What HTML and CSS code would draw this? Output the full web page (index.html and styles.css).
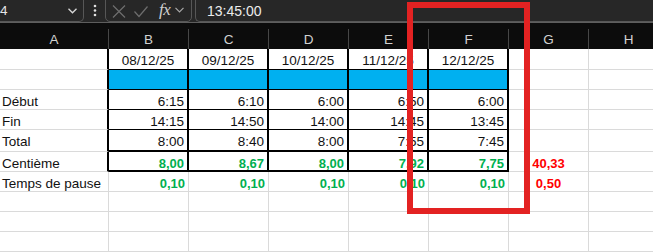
FILE: index.html
```html
<!DOCTYPE html>
<html lang="fr">
<head>
<meta charset="utf-8">
<title>Feuille</title>
<link rel="stylesheet" href="styles.css">
</head>
<body>
<div class="app">
  <div class="topbar">
    <div class="namebox">
      <span class="nb-text">4</span>
      <svg class="chev" width="9" height="6" viewBox="0 0 9 6"><polyline points="0.5,0.8 4.5,4.8 8.5,0.8" fill="none" stroke="#d8d8d8" stroke-width="1.3"/></svg>
    </div>
    <svg class="dots" width="21" height="22" viewBox="0 0 21 22"><circle cx="11" cy="6" r="1.3" fill="#e0e0e0"/><circle cx="11" cy="10.5" r="1.3" fill="#e0e0e0"/><circle cx="11" cy="15" r="1.3" fill="#e0e0e0"/></svg>
    <div class="fxbox">
      <svg class="ico-x" width="14" height="13" viewBox="0 0 14 13"><path d="M1 0.5 L13 12.5 M13 0.5 L1 12.5" stroke="#6e6e6e" stroke-width="1.2" fill="none"/></svg>
      <svg class="ico-ok" width="14" height="13" viewBox="0 0 14 13"><polyline points="0.5,6.5 5,11.5 13.5,1.5" stroke="#6e6e6e" stroke-width="1.2" fill="none"/></svg>
      <span class="fx">fx</span>
      <svg class="chev2" width="9" height="6" viewBox="0 0 9 6"><polyline points="0.5,0.8 4.5,4.8 8.5,0.8" fill="none" stroke="#a8a8a8" stroke-width="1.2"/></svg>
    </div>
    <div class="formula">13:45:00</div>
  </div>

  <div class="colheads">
    <div class="hc"><div class="hi">A</div></div>
    <div class="hc"><div class="hi">B</div></div>
    <div class="hc"><div class="hi">C</div></div>
    <div class="hc"><div class="hi">D</div></div>
    <div class="hc"><div class="hi">E</div></div>
    <div class="hc"><div class="hi">F</div></div>
    <div class="hc"><div class="hi">G</div></div>
    <div class="hc"><div class="hi">H</div></div>
  </div>

  <div class="sheet">
    <!-- row 1 -->
    <div class="c lab ka"></div>
    <div class="c ctr kb">08/12/25</div>
    <div class="c ctr kb">09/12/25</div>
    <div class="c ctr kb">10/12/25</div>
    <div class="c ctr kb">11/12/25</div>
    <div class="c ctr kb">12/12/25</div>
    <div class="c"></div>
    <div class="c"></div>
    <!-- row 2 -->
    <div class="c lab ka"></div>
    <div class="c kb blue"></div>
    <div class="c kb blue"></div>
    <div class="c kb blue"></div>
    <div class="c kb blue"></div>
    <div class="c kb blue"></div>
    <div class="c"></div>
    <div class="c"></div>
    <!-- row 3 -->
    <div class="c lab ka">Début</div>
    <div class="c r kb">6:15</div>
    <div class="c r kb">6:10</div>
    <div class="c r kb">6:00</div>
    <div class="c r kb">6:50</div>
    <div class="c r kb">6:00</div>
    <div class="c"></div>
    <div class="c"></div>
    <!-- row 4 -->
    <div class="c lab ka">Fin</div>
    <div class="c r kb">14:15</div>
    <div class="c r kb">14:50</div>
    <div class="c r kb">14:00</div>
    <div class="c r kb">14:45</div>
    <div class="c r kb">13:45</div>
    <div class="c"></div>
    <div class="c"></div>
    <!-- row 5 -->
    <div class="c lab ka">Total</div>
    <div class="c r kb kt">8:00</div>
    <div class="c r kb kt">8:40</div>
    <div class="c r kb kt">8:00</div>
    <div class="c r kb kt">7:55</div>
    <div class="c r kb kt">7:45</div>
    <div class="c"></div>
    <div class="c"></div>
    <!-- row 6 -->
    <div class="c lab ka">Centième</div>
    <div class="c r kb kt green">8,00</div>
    <div class="c r kb kt green">8,67</div>
    <div class="c r kb kt green">8,00</div>
    <div class="c r kb kt green">7,92</div>
    <div class="c r kb kt green">7,75</div>
    <div class="c ctr red">40,33</div>
    <div class="c"></div>
    <!-- row 7 -->
    <div class="c lab">Temps de pause</div>
    <div class="c r green">0,10</div>
    <div class="c r green">0,10</div>
    <div class="c r green">0,10</div>
    <div class="c r green">0,10</div>
    <div class="c r green">0,10</div>
    <div class="c ctr red">0,50</div>
    <div class="c"></div>
    <!-- row 8 -->
    <div class="c"></div><div class="c"></div><div class="c"></div><div class="c"></div><div class="c"></div><div class="c"></div><div class="c"></div><div class="c"></div>
    <!-- row 9 -->
    <div class="c"></div><div class="c"></div><div class="c"></div><div class="c"></div><div class="c"></div><div class="c"></div><div class="c"></div><div class="c"></div>
    <!-- row 10 -->
    <div class="c"></div><div class="c"></div><div class="c"></div><div class="c"></div><div class="c"></div><div class="c"></div><div class="c"></div><div class="c"></div>
  </div>

  <div class="annot"></div>
</div>
</body>
</html>
```

FILE: styles.css
```css
html, body {
  margin: 0;
  padding: 0;
  background: #ffffff;
}

.app {
  position: relative;
  width: 653px;
  height: 252px;
  overflow: hidden;
  font-family: "Liberation Sans", Arial, sans-serif;
}

/* ---------- formula bar ---------- */
.topbar {
  height: 22px;
  background: #272727;
  border-bottom: 1px solid #5e5e5e;
  display: flex;
  align-items: flex-end;
  overflow: hidden;
}

.namebox {
  flex: 0 0 auto;
  width: 84px;
  height: 28px;
  box-sizing: border-box;
  border: 1px solid #575757;
  border-left: none;
  border-radius: 0 5px 5px 0;
  display: flex;
  align-items: flex-end;
  padding: 0 0 2px 0;
  color: #e6e6e6;
  font-size: 13.5px;
  line-height: 16px;
}

.nb-text {
  flex: 1;
}

.chev {
  margin: 0 6px 5px 0;
}

.dots {
  flex: 0 0 auto;
  align-self: flex-start;
}

.fxbox {
  flex: 0 0 auto;
  width: 87px;
  height: 28px;
  box-sizing: border-box;
  border: 1px solid #575757;
  border-radius: 5px;
  display: flex;
  align-items: flex-end;
  padding: 0 0 3px 0;
}

.ico-x {
  margin-left: 6px;
}

.ico-ok {
  margin-left: 8px;
}

.fx {
  margin-left: 11px;
  font-family: "Liberation Serif", "Times New Roman", serif;
  font-style: italic;
  font-size: 17px;
  line-height: 16px;
  color: #cfcfcf;
  letter-spacing: -0.5px;
}

.chev2 {
  margin: 0 0 5px 5px;
}

.formula {
  flex: 1 1 auto;
  margin-left: 3px;
  height: 28px;
  box-sizing: border-box;
  border: 1px solid #575757;
  border-right: none;
  border-radius: 5px 0 0 5px;
  padding: 0 0 2px 11px;
  display: flex;
  align-items: flex-end;
  color: #ececec;
  font-size: 14px;
  line-height: 16px;
}

/* ---------- column headers ---------- */
.colheads {
  height: 26px;
  background: #0c0c0c;
  display: grid;
  grid-template-columns: 109px repeat(7, 80px);
}

.hc {
  padding-top: 6px;
  box-sizing: border-box;
  height: 26px;
}

.hi {
  height: 20px;
  box-sizing: border-box;
  border-right: 1px solid #474747;
  padding-top: 2px;
  text-align: center;
  color: #d2d2d2;
  font-size: 13.5px;
  line-height: 18px;
}

/* ---------- sheet ---------- */
.sheet {
  display: grid;
  grid-template-columns: 109px repeat(7, 80px);
  grid-template-rows: 21px 20px 20px 20px 22px 20px 20px 20px 20px 20px;
}

.c {
  box-sizing: border-box;
  border-right: 1px solid #dadada;
  border-bottom: 1px solid #dadada;
  padding: 3px 3px 0 3px;
  font-size: 13.5px;
  line-height: 17px;
  color: #111;
  white-space: nowrap;
  overflow: hidden;
}

.lab {
  padding-left: 2px;
}

.r {
  text-align: right;
}

.ctr {
  text-align: center;
}

.ka {
  border-right: 2px solid #000;
}

.kb {
  border-right: 2px solid #000;
  border-bottom: 1px solid #000;
}

.kt {
  border-bottom: 2px solid #000;
}

.blue {
  background: #00b0f0;
}

.green {
  color: #00b050;
  font-weight: bold;
  font-size: 13px;
}

.red {
  color: #ff0000;
  font-weight: bold;
  font-size: 13px;
}

/* ---------- annotation ---------- */
.annot {
  position: absolute;
  left: 407px;
  top: 2px;
  width: 123px;
  height: 212px;
  box-sizing: border-box;
  border: 6px solid #e32222;
  pointer-events: none;
}
```
